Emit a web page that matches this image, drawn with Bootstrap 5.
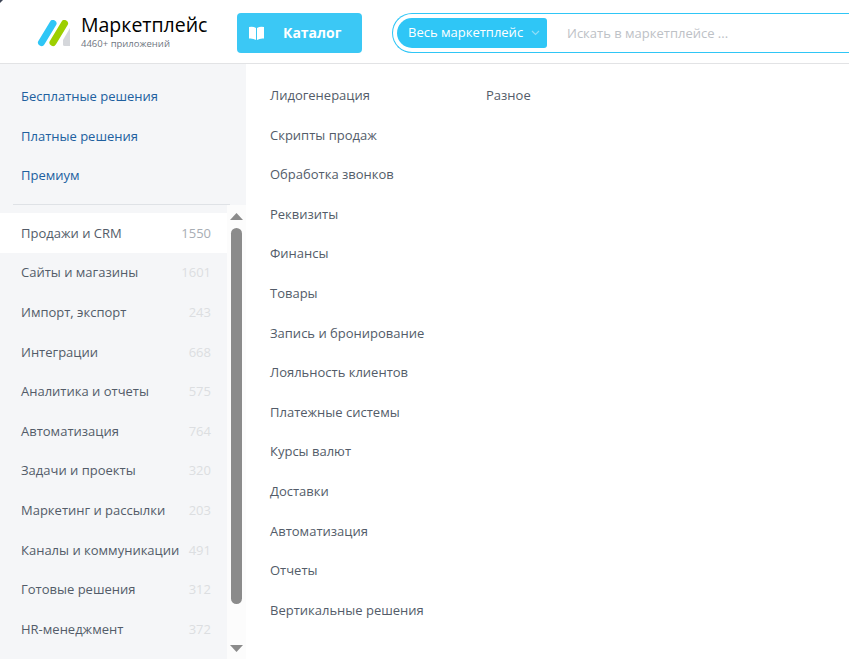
<!DOCTYPE html>
<html lang="ru">
<head>
    <meta charset="UTF-8">
    <title>Маркетплейс</title>
    <link rel="stylesheet" href="https://cdn.jsdelivr.net/npm/bootstrap@5.3.0/dist/css/bootstrap.min.css">
    <style>
        html, body { height: 100%; overflow: hidden; }
        body { font-family: "Open Sans", "Noto Sans", sans-serif; font-size: 13px; color: #535c69; background: #fff; }
        .mp-header { height: 64px; border-bottom: 1px solid #e2e3e5; }
        .mp-brand { width: 237px; padding-left: 37px; }
        .mp-logo { margin-top: 3px; }
        .mp-brandtext { margin-left: 11px; }
        .mp-name { font-size: 19.5px; line-height: 22px; color: #000; font-weight: 500; }
        .mp-count { font-size: 9.5px; line-height: 12px; color: #6f767f; margin-top: 2px; }
        .mp-catalog { width: 125px; height: 40px; margin-top: 2px; background: #3bc8f5; border-radius: 4px; color: #fff; font-size: 14px; font-weight: 700; padding-left: 12px; gap: 19px; }
        .mp-search { height: 40px; margin-top: 2px; margin-left: 30px; flex: 1; border: 1px solid #2fc6f6; border-right: 0; border-radius: 20px 0 0 20px; padding-left: 4px; }
        .mp-scope { width: 150px; height: 30px; background: #2fc6f6; color: #fff; border-radius: 15px 3px 3px 15px; padding-left: 11px; font-size: 13px; gap: 8px; }
        .mp-placeholder { margin: 3px 0 0 20px; color: #bdc1c6; }
        .mp-body { height: 595px; }
        .mp-side { width: 246px; background: #f5f6f8; overflow: hidden; }
        .mp-plans { height: 140px; padding: 13px 0 0 21px; border: 0; }
        .mp-plans a { display: block; height: 39.6px; line-height: 39px; color: #20609f; text-decoration: none; }
        .mp-rule { height: 1px; background: #dfe2e6; margin-left: 13px; margin-right: 16px; }
        .mp-cats { height: 455px; padding-top: 8px; }
        .mp-list { flex: 1; }
        .mp-row { height: 39.6px; padding: 1.6px 16px 0 21px; color: #535c69; }
        .mp-row span:last-child { color: #dcdee1; }
        .mp-row.is-active { background: #fff; }
        .mp-row.is-active span:last-child { color: #a8adb4; }
        .mp-scroll { width: 19px; background: #fcfcfc; margin-top: -8px; position: relative; }
        .mp-thumb { width: 11px; height: 376px; margin: 23px 0 0 4px; background: #8b8b8b; border-radius: 6px; }
        .mp-arrow { position: absolute; left: 3px; width: 13px; height: 7px; }
        .mp-arrow-up { top: 8px; }
        .mp-arrow-down { top: 440px; }
        .mp-main { padding: 12px 0 0 24px; }
        .mp-col { width: 216px; }
        .mp-col div { height: 39.6px; line-height: 39px; }
        .mp-corner { position: absolute; top: 0; left: 0; border-top: 3px solid #3f4657; border-right: 3px solid transparent; }
    </style>
</head>
<body>
<div class="mp-corner"></div>
<div class="mp-header d-flex align-items-center">
    <div class="mp-brand d-flex align-items-center">
        <svg class="mp-logo flex-shrink-0" width="33" height="27" viewBox="0 0 33 27">
            <path d="M16 3.500 L4.500 22.500" stroke="#2fc6f6" stroke-width="7" stroke-linecap="round"/>
            <path d="M27.500 3.500 L16 22.500" stroke="#9dcf00" stroke-width="7" stroke-linecap="round"/>
            <path d="M33 8 L26 20 L26 24.500 Q26 26 27.500 26 L33 26 Z" fill="#d5d7db"/>
        </svg>
        <div class="mp-brandtext">
            <div class="mp-name">Маркетплейс</div>
            <div class="mp-count">4460+ приложений</div>
        </div>
    </div>
    <div class="mp-catalog d-flex align-items-center flex-shrink-0">
        <svg width="15" height="14" viewBox="0 0 15 14">
            <path d="M0 1 Q4 0 7 2 L7 14 Q4 12 0 12.500 Z M8 2 Q11 0 15 1 L15 12.500 Q11 12 8 14 Z" fill="#fff"/>
        </svg>
        <span>Каталог</span>
    </div>
    <div class="mp-search d-flex align-items-center">
        <div class="mp-scope d-flex align-items-center flex-shrink-0">
            <span>Весь маркетплейс</span>
            <svg width="9" height="6" viewBox="0 0 9 6"><path d="M1 1 L4.500 4.500 L8 1" fill="none" stroke="#8fdcf7" stroke-width="1.200"/></svg>
        </div>
        <div class="mp-placeholder">Искать в маркетплейсе ...</div>
    </div>
</div>
<div class="mp-body d-flex">
    <div class="mp-side flex-shrink-0">
        <div class="mp-plans">
            <a href="#">Бесплатные решения</a>
            <a href="#">Платные решения</a>
            <a href="#">Премиум</a>
        </div>
        <div class="mp-rule"></div>
        <div class="mp-cats d-flex">
            <div class="mp-list">
                <div class="mp-row is-active d-flex justify-content-between align-items-center"><span>Продажи и CRM</span><span>1550</span></div>
                <div class="mp-row d-flex justify-content-between align-items-center"><span>Сайты и магазины</span><span>1601</span></div>
                <div class="mp-row d-flex justify-content-between align-items-center"><span>Импорт, экспорт</span><span>243</span></div>
                <div class="mp-row d-flex justify-content-between align-items-center"><span>Интеграции</span><span>668</span></div>
                <div class="mp-row d-flex justify-content-between align-items-center"><span>Аналитика и отчеты</span><span>575</span></div>
                <div class="mp-row d-flex justify-content-between align-items-center"><span>Автоматизация</span><span>764</span></div>
                <div class="mp-row d-flex justify-content-between align-items-center"><span>Задачи и проекты</span><span>320</span></div>
                <div class="mp-row d-flex justify-content-between align-items-center"><span>Маркетинг и рассылки</span><span>203</span></div>
                <div class="mp-row d-flex justify-content-between align-items-center"><span>Каналы и коммуникации</span><span>491</span></div>
                <div class="mp-row d-flex justify-content-between align-items-center"><span>Готовые решения</span><span>312</span></div>
                <div class="mp-row d-flex justify-content-between align-items-center"><span>HR-менеджмент</span><span>372</span></div>
            </div>
            <div class="mp-scroll flex-shrink-0">
                <svg class="mp-arrow mp-arrow-up" viewBox="0 0 13 7"><path d="M6.500 0 L13 7 L0 7 Z" fill="#8b8b8b"/></svg>
                <div class="mp-thumb"></div>
                <svg class="mp-arrow mp-arrow-down" viewBox="0 0 13 7"><path d="M0 0 L13 0 L6.500 7 Z" fill="#8b8b8b"/></svg>
            </div>
        </div>
    </div>
    <div class="mp-main d-flex">
        <div class="mp-col">
            <div>Лидогенерация</div>
            <div>Скрипты продаж</div>
            <div>Обработка звонков</div>
            <div>Реквизиты</div>
            <div>Финансы</div>
            <div>Товары</div>
            <div>Запись и бронирование</div>
            <div>Лояльность клиентов</div>
            <div>Платежные системы</div>
            <div>Курсы валют</div>
            <div>Доставки</div>
            <div>Автоматизация</div>
            <div>Отчеты</div>
            <div>Вертикальные решения</div>
        </div>
        <div class="mp-col">
            <div>Разное</div>
        </div>
    </div>
</div>
<script src="https://cdn.jsdelivr.net/npm/bootstrap@5.3.0/dist/js/bootstrap.bundle.min.js"></script>
</body>
</html>
